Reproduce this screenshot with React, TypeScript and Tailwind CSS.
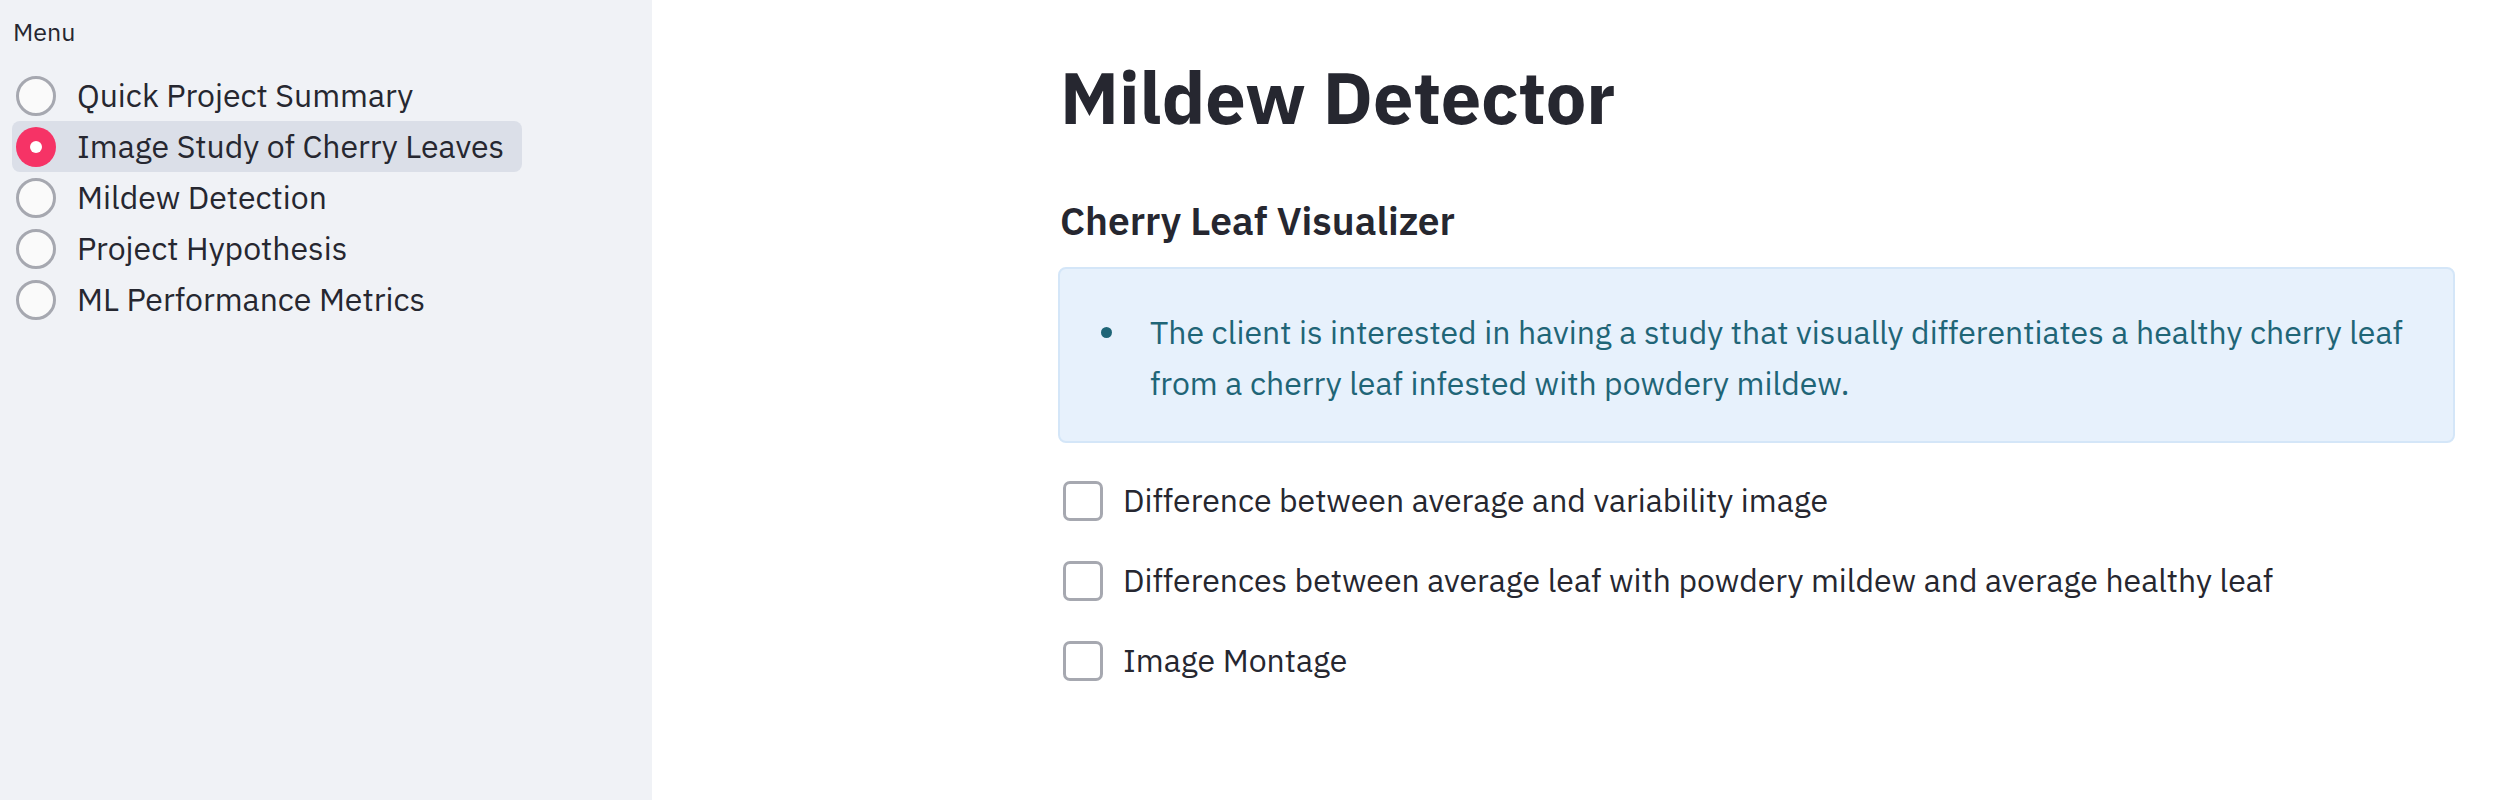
import { useState } from "react";

const PAGES = [
  "Quick Project Summary",
  "Image Study of Cherry Leaves",
  "Mildew Detection",
  "Project Hypothesis",
  "ML Performance Metrics",
];

const OPTIONS = [
  "Difference between average and variability image",
  "Differences between average leaf with powdery mildew and average healthy leaf",
  "Image Montage",
];

const font = { fontFamily: '"IBM Plex Sans", "Noto Sans", sans-serif' };

function Sidebar({ page, setPage }: { page: number; setPage: (i: number) => void }) {
  return (
    <aside className="w-[652px] shrink-0 h-screen bg-[#f0f2f6] px-[12px] pt-[12px]">
      <div className="text-[25px] leading-[1.6] text-[#262730] pl-[1px]">Menu</div>
      <div className="mt-[18px] flex flex-col items-start">
        {PAGES.map((p, i) => {
          const active = i === page;
          return (
            <button
              key={p}
              onClick={() => setPage(i)}
              className={`flex items-center h-[51px] pl-[4px] pr-[18px] rounded-[8px] ${
                active ? "bg-[#dbdfe8]" : ""
              }`}
            >
              {active ? (
                <span className="w-[40px] h-[40px] rounded-full bg-[#f63366] flex items-center justify-center">
                  <span className="w-[12px] h-[12px] rounded-full bg-white" />
                </span>
              ) : (
                <span className="w-[40px] h-[40px] rounded-full border-[3px] border-[#a6a8b0] bg-[#fafafa]" />
              )}
              <span className="ml-[21px] text-[32px] leading-[1.6] text-[#262730]">{p}</span>
            </button>
          );
        })}
      </div>
    </aside>
  );
}

export default function App() {
  const [page, setPage] = useState(1);
  const [checked, setChecked] = useState<boolean[]>([false, false, false]);

  return (
    <div className="flex min-h-screen bg-white" style={font}>
      <Sidebar page={page} setPage={setPage} />
      <main className="flex-1 pl-[406px] pr-[51px] pt-[54px]">
        <h1 className="text-[72px] leading-[1.2] font-bold text-[#262730] pl-[2px]">Mildew Detector</h1>
        <h3 className="mt-[58px] text-[39px] leading-[1.2] font-semibold text-[#262730] pl-[2px]">
          Cherry Leaf Visualizer
        </h3>
        <div className="mt-[22px] h-[176px] rounded-[8px] border-2 border-[#d4e6f8] bg-[#e7f1fc] pt-[38px] pl-[41px]">
          <div className="flex text-[32px] leading-[1.6] text-[#1f6577]">
            <span className="w-[11px] h-[11px] rounded-full bg-[#1f6577] mt-[20px] shrink-0" />
            <p className="ml-[38px]">
              The client is interested in having a study that visually differentiates a healthy cherry leaf
              <br />
              from a cherry leaf infested with powdery mildew.
            </p>
          </div>
        </div>
        <div className="mt-[32px] flex flex-col gap-[29px]">
          {OPTIONS.map((o, i) => (
            <label key={o} className="flex items-center h-[51px] pl-[5px] cursor-pointer">
              <input
                type="checkbox"
                className="hidden"
                checked={checked[i]}
                onChange={() => setChecked((c) => c.map((v, j) => (j === i ? !v : v)))}
              />
              <span
                className={`w-[40px] h-[40px] rounded-[7px] border-[3px] shrink-0 ${
                  checked[i] ? "bg-[#f63366] border-[#f63366]" : "border-[#a6a8b0] bg-white"
                }`}
              />
              <span className="ml-[20px] text-[32px] leading-[1.6] text-[#262730]">{o}</span>
            </label>
          ))}
        </div>
      </main>
    </div>
  );
}
